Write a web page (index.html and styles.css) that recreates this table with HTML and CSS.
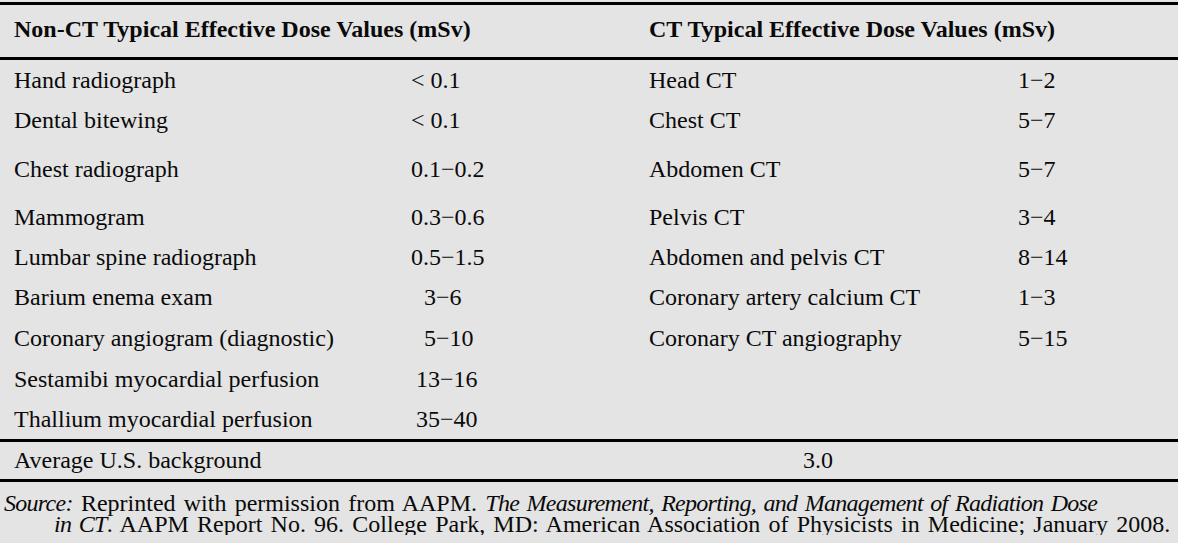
FILE: index.html
```html
<!DOCTYPE html>
<html lang="en">
<head>
<meta charset="utf-8">
<title>Typical Effective Dose Values</title>
<link rel="stylesheet" href="styles.css">
</head>
<body>
<table class="dose-table">
  <colgroup>
    <col class="c1"><col class="c2"><col class="c3"><col class="c4">
  </colgroup>
  <thead>
    <tr>
      <th colspan="2">Non-CT Typical Effective Dose Values (mSv)</th>
      <th colspan="2">CT Typical Effective Dose Values (mSv)</th>
    </tr>
  </thead>
  <tbody>
    <tr class="first">
      <td>Hand radiograph</td><td>&lt; 0.1</td>
      <td>Head CT</td><td>1−2</td>
    </tr>
    <tr>
      <td>Dental bitewing</td><td>&lt; 0.1</td>
      <td>Chest CT</td><td>5−7</td>
    </tr>
    <tr class="gap-9">
      <td>Chest radiograph</td><td>0.1−0.2</td>
      <td>Abdomen CT</td><td>5−7</td>
    </tr>
    <tr class="gap-8">
      <td>Mammogram</td><td>0.3−0.6</td>
      <td>Pelvis CT</td><td>3−4</td>
    </tr>
    <tr>
      <td>Lumbar spine radiograph</td><td>0.5−1.5</td>
      <td>Abdomen and pelvis CT</td><td>8−14</td>
    </tr>
    <tr>
      <td>Barium enema exam</td><td class="v-mid">3−6</td>
      <td>Coronary artery calcium CT</td><td>1−3</td>
    </tr>
    <tr class="gap-1">
      <td>Coronary angiogram (diagnostic)</td><td class="v-mid">5−10</td>
      <td>Coronary CT angiography</td><td>5−15</td>
    </tr>
    <tr class="gap-1">
      <td>Sestamibi myocardial perfusion</td><td class="v-wide">13−16</td>
      <td></td><td></td>
    </tr>
    <tr class="last">
      <td>Thallium myocardial perfusion</td><td class="v-wide">35−40</td>
      <td></td><td></td>
    </tr>
  </tbody>
  <tfoot>
    <tr>
      <td>Average U.S. background</td>
      <td colspan="3" class="avg">3.0</td>
    </tr>
  </tfoot>
</table>
<p class="source"><em>Source:</em> Reprinted with permission from AAPM. <em>The Measurement, Reporting, and Management of Radiation Dose</em><br><em>in CT</em>. AAPM Report No. 96. College Park, MD: American Association of Physicists in Medicine; January 2008.</p>
</body>
</html>
```

FILE: styles.css
```css
html, body {
  margin: 0;
  padding: 0;
  background: #e4e4e4;
}

body {
  font-family: "Liberation Serif", "Times New Roman", serif;
  color: #0a0a0a;
}

.dose-table {
  width: 1178px;
  margin-top: 2px;
  border-collapse: separate;
  border-spacing: 0;
  table-layout: fixed;
  font-size: 24px;
  line-height: 24px;
}

.c1 { width: 397px; }
.c2 { width: 238px; }
.c3 { width: 369px; }
.c4 { width: 174px; }

.dose-table th {
  text-align: left;
  font-weight: bold;
  padding: 12px 0 16px 14px;
  border-top: 3px solid #000;
  border-bottom: 3px solid #000;
  white-space: nowrap;
}

.dose-table td {
  padding: 8px 0 8px 14px;
  text-align: left;
  white-space: nowrap;
  vertical-align: top;
}

.dose-table tr.gap-9 td { padding-top: 17px; }
.dose-table tr.gap-8 td { padding-top: 16px; }
.dose-table tr.gap-1 td { padding-top: 9px; }

.dose-table td.v-mid { padding-left: 27px; }
.dose-table td.v-wide { padding-left: 19px; }

.dose-table tfoot td {
  padding: 6px 0 7px 14px;
  border-top: 3px solid #000;
  border-bottom: 3px solid #000;
}

.dose-table tfoot td.avg {
  padding-left: 406px;
}

.source {
  margin: 11px 0 0 0;
  padding-left: 54px;
  text-indent: -50px;
  font-size: 24px;
  line-height: 21px;
  word-spacing: 2.2px;
  white-space: nowrap;
}

.source em {
  letter-spacing: -0.72px;
}
```
